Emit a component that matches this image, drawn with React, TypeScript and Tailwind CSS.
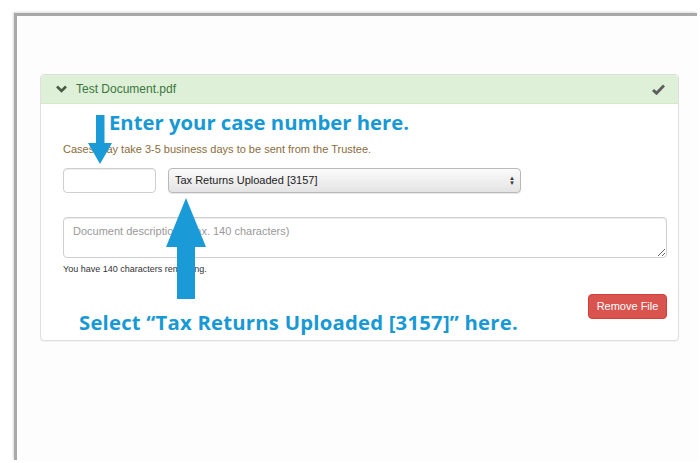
import React from "react"

const BLUE = "#1a9bd7"

function DownArrow() {
  return (
    <svg className="absolute left-[47px] top-[40px]" width="24" height="49" viewBox="0 0 24 49">
      <rect x="8" y="0" width="8.5" height="29" fill={BLUE} />
      <polygon points="0,28 24,28 12,49" fill={BLUE} />
    </svg>
  )
}

function UpArrow() {
  return (
    <svg className="absolute left-[125px] top-[123px]" width="40" height="101" viewBox="0 0 40 101">
      <polygon points="20,0 0,49 40,49" fill={BLUE} />
      <rect x="11" y="48" width="18" height="53" fill={BLUE} />
    </svg>
  )
}

function Chevron() {
  return (
    <svg width="11" height="8" viewBox="0 0 11 8">
      <path d="M1 1.5 L5.5 6 L10 1.5" fill="none" stroke="#4a5a48" strokeWidth="2.6" />
    </svg>
  )
}

function Check() {
  return (
    <svg width="13" height="11" viewBox="0 0 13 11">
      <path d="M1 6 L4.5 9.2 L12 1.5" fill="none" stroke="#5f5f5f" strokeWidth="3" />
    </svg>
  )
}

export default function App() {
  return (
    <div className="w-[700px] h-[463px] bg-white overflow-hidden font-['Liberation_Sans',Arial,sans-serif]">
      <div className="ml-[14px] mt-[13px] mr-[3px] h-[447px] border-l-[3px] border-t-[3px] border-[#a8a8a8] shadow-[-1px_-1px_2px_rgba(0,0,0,0.15)] bg-[#fdfdfd]">
        <div className="relative ml-[23px] mt-[58px] w-[639px] rounded border border-[#dedede] bg-white shadow-[0_1px_1px_rgba(0,0,0,0.05)]">
          <div className="flex h-[29px] items-center justify-between rounded-t border-b border-[#d6e9c6] bg-[#dff0d8] pl-[15px] pr-[13px]">
            <div className="flex items-center gap-[9px]">
              <Chevron />
              <span className="text-[12px] text-[#3c763d]">Test Document.pdf</span>
            </div>
            <Check />
          </div>

          <div className="pl-[22px] pr-[11px] pt-[5px] pb-[5px]">
            <div className="ml-[46px] text-[20.3px] leading-[26px] font-bold font-['Open_Sans',sans-serif] text-[#1799d6]">
              Enter your case number here.
            </div>
            <p className="mt-[7px] text-[11px] leading-[14px] text-[#8a6d3b]">
              Cases may take 3-5 business days to be sent from the Trustee.
            </p>

            <div className="mt-[12px] flex gap-[12px]">
              <input className="h-[25px] w-[93px] rounded border border-[#cfcfcf] bg-white shadow-[inset_0_1px_1px_rgba(0,0,0,0.075)] outline-none" />
              <div className="flex h-[25px] w-[353px] items-center justify-between rounded border border-[#b9b9b9] bg-gradient-to-b from-[#fbfbfb] to-[#e4e4e4] pl-[6px] pr-[5px] shadow-[0_1px_1px_rgba(0,0,0,0.1)]">
                <span className="text-[11px] text-[#222]">Tax Returns Uploaded [3157]</span>
                <span className="flex flex-col text-[6px] leading-[5px] text-[#333]">
                  <span>▲</span>
                  <span>▼</span>
                </span>
              </div>
            </div>

            <textarea
              className="mt-[24px] block h-[41px] w-full rounded border border-[#cfcfcf] px-[9px] py-[5px] text-[11px] text-[#555] placeholder:text-[#999] shadow-[inset_0_1px_1px_rgba(0,0,0,0.075)] outline-none"
              placeholder="Document description (max. 140 characters)"
            />
            <p className="mt-[5px] text-[9px] leading-[12px] text-[#333]">You have 140 characters remaining.</p>

            <div className="mt-[19px] flex items-start justify-between">
              <div className="ml-[16px] mt-[15px] text-[20.3px] leading-[26px] tracking-[0.22px] font-bold font-['Open_Sans',sans-serif] text-[#1799d6]">
                Select “Tax Returns Uploaded [3157]” here.
              </div>
              <button className="h-[25px] w-[79px] rounded border border-[#d43f3a] bg-[#d9534f] text-[11px] text-white">
                Remove File
              </button>
            </div>
          </div>

          <DownArrow />
          <UpArrow />
        </div>
      </div>
    </div>
  )
}
